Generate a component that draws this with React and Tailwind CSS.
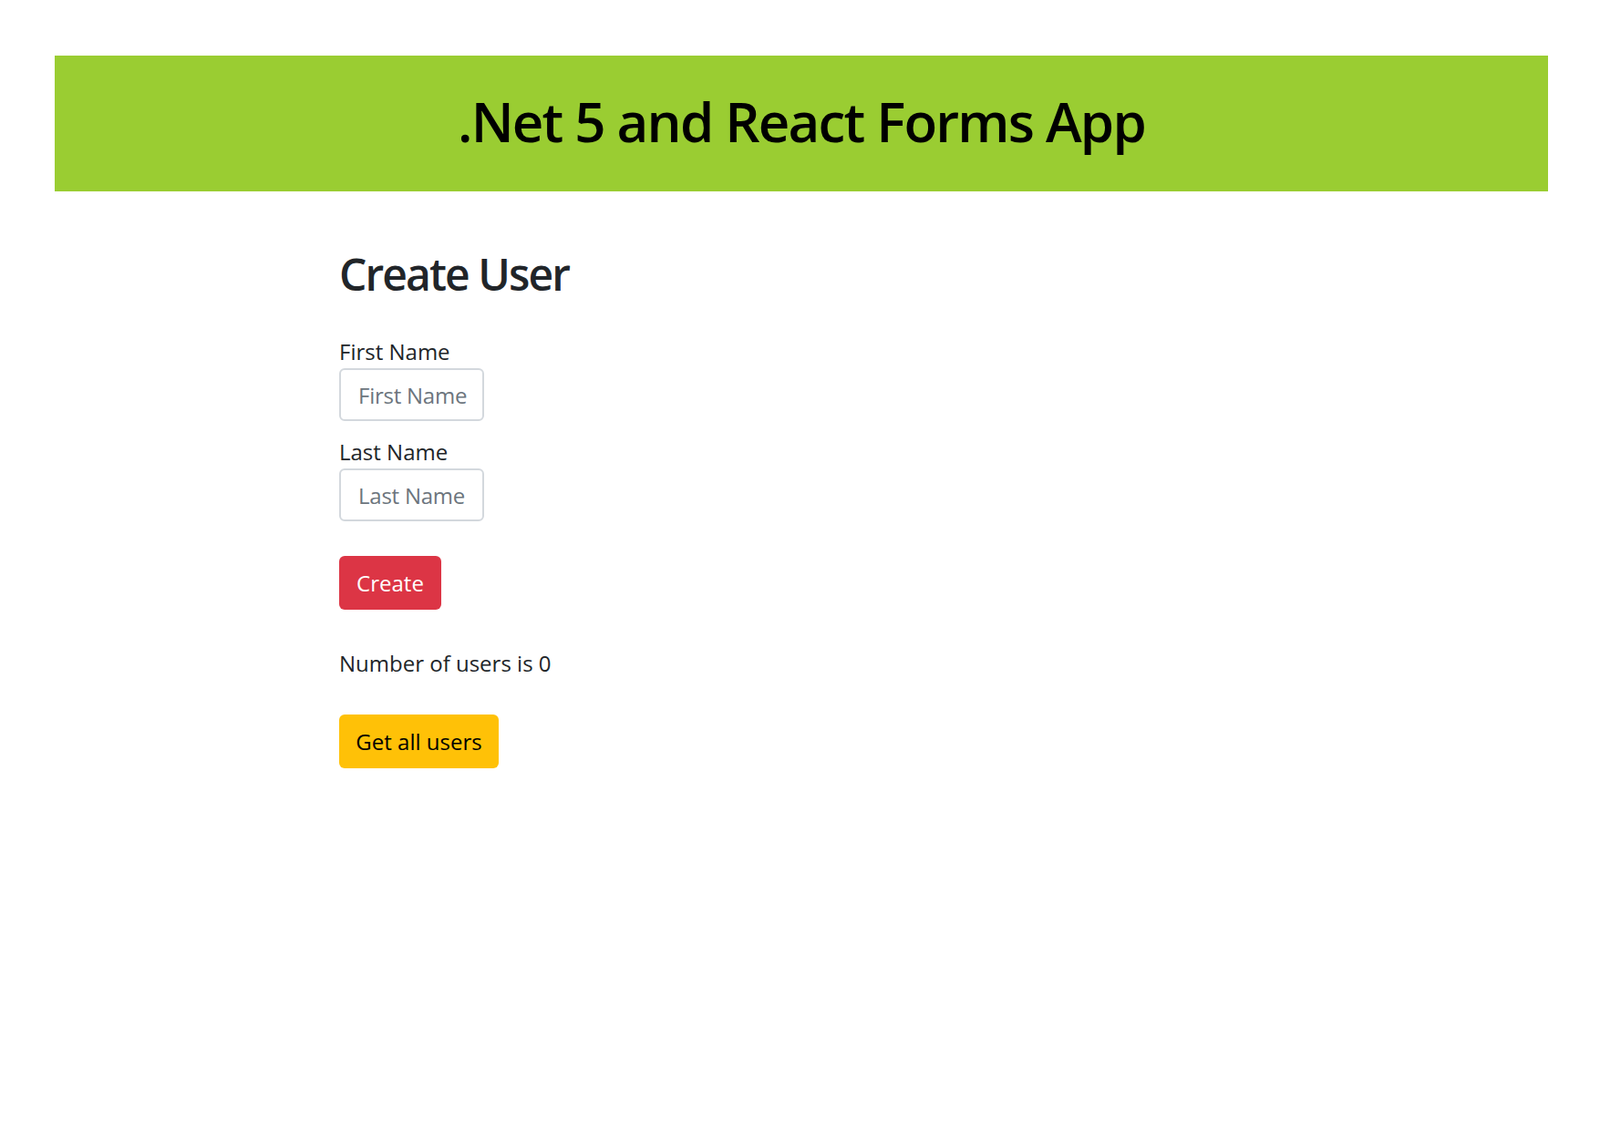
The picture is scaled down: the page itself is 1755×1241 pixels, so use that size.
import React, { useState } from 'react';

export default function App() {
  const [form, setForm] = useState({ firstName: '', lastName: '' });
  const [count, setCount] = useState(0);

  return (
    <div className="min-h-screen bg-white pt-[61px] text-[#212529] font-['Open_Sans',sans-serif]">
      {/* Banner */}
      <header className="ml-[60px] mr-[57px] h-[149px] bg-[#9acd32] flex items-center justify-center pb-[6px]">
        <h1 className="text-[60px] leading-[72px] font-semibold tracking-[-0.03em] text-black">.Net 5 and React Forms App</h1>
      </header>

      {/* Form */}
      <main className="ml-[372px] pt-[62px]">
        <h2 className="text-[48px] leading-[58px] font-semibold tracking-[-0.04em] mb-[38px]">Create User</h2>

        <form onSubmit={e => { e.preventDefault(); setCount(count + 1); }}>
          <div className="mb-[16px]">
            <label className="block text-[24px] leading-[36px]">First Name</label>
            <input
              className="block w-[159px] h-[58px] border-2 border-[#d3d8dd] rounded-[6px] pl-[19px] pr-0 text-[24px] tracking-[-0.01em] placeholder:text-[#6c757d] outline-none"
              placeholder="First Name"
              value={form.firstName}
              onChange={e => setForm({ ...form, firstName: e.target.value })}
            />
          </div>
          <div>
            <label className="block text-[24px] leading-[36px]">Last Name</label>
            <input
              className="block w-[159px] h-[58px] border-2 border-[#d3d8dd] rounded-[6px] pl-[19px] pr-0 text-[24px] tracking-[-0.01em] placeholder:text-[#6c757d] outline-none"
              placeholder="Last Name"
              value={form.lastName}
              onChange={e => setForm({ ...form, lastName: e.target.value })}
            />
          </div>
          <button className="mt-[38px] w-[112px] h-[59px] rounded-[6px] bg-[#dc3545] text-white text-[24px] leading-[36px]">
            Create
          </button>
        </form>

        <p className="mt-[41px] text-[24px] leading-[36px]">Number of users is {count}</p>

        <button className="mt-[38px] w-[175px] h-[59px] rounded-[6px] bg-[#ffc107] text-black text-[24px] leading-[36px]">
          Get all users
        </button>
      </main>
    </div>
  );
}
